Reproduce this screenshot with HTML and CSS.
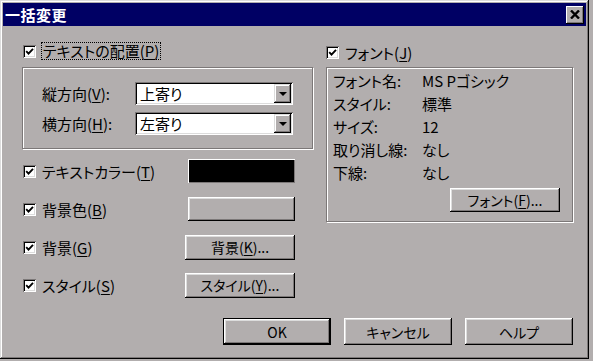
FILE: index.html
```html
<!DOCTYPE html>
<html lang="ja">
<head>
    <meta charset="UTF-8">
    <meta name="viewport" content="width=device-width, initial-scale=1.0">
    <title>一括変更</title>
    <link rel="stylesheet" href="styles.css">
</head>
<body>
    <div class="window">
        <div class="titlebar">
            <span class="title">一括変更</span>
            <div class="close">
                <svg width="10" height="9" viewBox="0 0 10 9">
                    <path d="M1 0.5 L9 8.5 M9 0.5 L1 8.5" stroke="#000" stroke-width="2.4"/>
                </svg>
            </div>
        </div>

        <div class="body">
            <div class="columns">
                <div class="left">
                    <div class="check">
                        <span class="box"><svg width="9" height="9" viewBox="0 0 9 9"><path d="M1.2 4.2 L3.5 6.6 L8 1.8" fill="none" stroke="#000" stroke-width="1.9"/></svg></span>
                        <span class="focus">テキストの配置(<u>P</u>)</span>
                    </div>

                    <div class="group align">
                        <div class="field">
                            <span class="field-label">縦方向(<u>V</u>):</span>
                            <div class="combo"><span class="combo-text">上寄り</span><span class="drop"><i class="arrow"></i></span></div>
                        </div>
                        <div class="field">
                            <span class="field-label">横方向(<u>H</u>):</span>
                            <div class="combo"><span class="combo-text">左寄り</span><span class="drop"><i class="arrow"></i></span></div>
                        </div>
                    </div>

                    <div class="options">
                        <div class="opt">
                            <div class="check">
                                <span class="box"><svg width="9" height="9" viewBox="0 0 9 9"><path d="M1.2 4.2 L3.5 6.6 L8 1.8" fill="none" stroke="#000" stroke-width="1.9"/></svg></span>
                                <span>テキストカラー(<u>T</u>)</span>
                            </div>
                            <div class="swatch black"></div>
                        </div>
                        <div class="opt">
                            <div class="check">
                                <span class="box"><svg width="9" height="9" viewBox="0 0 9 9"><path d="M1.2 4.2 L3.5 6.6 L8 1.8" fill="none" stroke="#000" stroke-width="1.9"/></svg></span>
                                <span>背景色(<u>B</u>)</span>
                            </div>
                            <div class="swatch"></div>
                        </div>
                        <div class="opt">
                            <div class="check">
                                <span class="box"><svg width="9" height="9" viewBox="0 0 9 9"><path d="M1.2 4.2 L3.5 6.6 L8 1.8" fill="none" stroke="#000" stroke-width="1.9"/></svg></span>
                                <span>背景(<u>G</u>)</span>
                            </div>
                            <div class="btn opt-btn">背景(<u>K</u>)...</div>
                        </div>
                        <div class="opt">
                            <div class="check">
                                <span class="box"><svg width="9" height="9" viewBox="0 0 9 9"><path d="M1.2 4.2 L3.5 6.6 L8 1.8" fill="none" stroke="#000" stroke-width="1.9"/></svg></span>
                                <span>スタイル(<u>S</u>)</span>
                            </div>
                            <div class="btn opt-btn">スタイル(<u>Y</u>)...</div>
                        </div>
                    </div>
                </div>

                <div class="right">
                    <div class="check">
                        <span class="box"><svg width="9" height="9" viewBox="0 0 9 9"><path d="M1.2 4.2 L3.5 6.6 L8 1.8" fill="none" stroke="#000" stroke-width="1.9"/></svg></span>
                        <span>フォント(<u>J</u>)</span>
                    </div>

                    <div class="group font-info">
                        <div class="info">
                            <span>フォント名:</span><span>MS Pゴシック</span>
                            <span>スタイル:</span><span>標準</span>
                            <span>サイズ:</span><span>12</span>
                            <span>取り消し線:</span><span>なし</span>
                            <span>下線:</span><span>なし</span>
                        </div>
                        <div class="font-btn-row">
                            <div class="btn font-btn">フォント(<u>F</u>)...</div>
                        </div>
                    </div>
                </div>
            </div>

            <div class="actions">
                <div class="btn default">OK</div>
                <div class="btn">キャンセル</div>
                <div class="btn">ヘルプ</div>
            </div>
        </div>
    </div>
</body>
</html>
```

FILE: styles.css
```css
body {
    margin: 0;
    background: #b2aeae;
    font-family: "Noto Sans CJK JP", "Noto Sans", sans-serif;
    font-size: 15px;
    font-feature-settings: "palt";
    color: #000;
}
u {
    text-decoration-thickness: 1px;
    text-underline-offset: 2px;
}
.window {
    width: 589px;
    height: 359px;
    box-sizing: border-box;
    padding: 3px;
    background: #b2aeae;
    box-shadow: inset -1px -1px #000, inset 1px 1px #dcdcdc, inset -2px -2px #7c7878, inset 2px 2px #fff;
    display: flex;
    flex-direction: column;
}
.titlebar {
    height: 23px;
    background: #000064;
    display: flex;
    align-items: center;
    justify-content: space-between;
    padding: 0 2px 0 2px;
}
.title {
    color: #fff;
    font-weight: bold;
    font-size: 15px;
    letter-spacing: 0.5px;
}
.close {
    width: 18px;
    height: 18px;
    box-sizing: border-box;
    background: #b2aeae;
    box-shadow: inset -1px -1px #000, inset 1px 1px #fff, inset -2px -2px #7c7878;
    display: flex;
    align-items: center;
    justify-content: center;
    padding-right: 1px;
}
.body {
    padding: 17px 13px 0 19px;
}
.columns {
    display: flex;
    gap: 13px;
}
.left {
    width: 291px;
}
.right {
    width: 247px;
}
.check {
    display: flex;
    align-items: center;
    height: 16px;
    gap: 6px;
}
.left > .check {
    padding-left: 1px;
}
.right > .check {
    margin-top: 1px;
}
.box {
    width: 13px;
    height: 13px;
    box-sizing: border-box;
    background: #fff;
    box-shadow: inset 1px 1px #7c7878, inset -1px -1px #fff, inset 2px 2px #000, inset -2px -2px #dcdcdc;
    display: flex;
    align-items: center;
    justify-content: center;
    flex-shrink: 0;
}
.focus {
    outline: 1px dotted #000;
    outline-offset: 0;
    padding: 0 1px;
    line-height: 16px;
}
.group {
    border: 1px solid #7c7878;
    box-shadow: inset 1px 1px #fff, 1px 1px #fff;
}
.align {
    margin-top: 8px;
    height: 82px;
    box-sizing: border-box;
    padding: 14px 19px 0 19px;
    display: flex;
    flex-direction: column;
    gap: 7px;
}
.field {
    display: flex;
    align-items: center;
    justify-content: space-between;
}
.combo {
    width: 158px;
    height: 23px;
    box-sizing: border-box;
    background: #fff;
    box-shadow: inset 1px 1px #7c7878, inset -1px -1px #fff, inset 2px 2px #000, inset -2px -2px #dcdcdc;
    display: flex;
    align-items: center;
    padding: 2px;
}
.combo-text {
    flex: 1;
    padding-left: 3px;
}
.drop {
    width: 17px;
    height: 19px;
    box-sizing: border-box;
    background: #b2aeae;
    box-shadow: inset -1px -1px #000, inset 1px 1px #dcdcdc, inset -2px -2px #7c7878, inset 2px 2px #fff;
    display: flex;
    align-items: center;
    justify-content: center;
}
.arrow {
    width: 0;
    height: 0;
    border-left: 4px solid transparent;
    border-right: 4px solid transparent;
    border-top: 4px solid #000;
}
.options {
    margin-top: 10px;
    display: flex;
    flex-direction: column;
    gap: 14px;
    padding-right: 18px;
}
.opt {
    height: 24px;
    display: flex;
    align-items: center;
    justify-content: space-between;
    padding-left: 1px;
}
.btn {
    height: 24px;
    box-sizing: border-box;
    background: #b2aeae;
    box-shadow: inset -1px -1px #000, inset 1px 1px #fff, inset -2px -2px #7c7878, inset 2px 2px #dcdcdc;
    display: flex;
    align-items: center;
    justify-content: center;
    font-size: 14px;
}
.swatch {
    width: 107px;
    height: 24px;
    box-sizing: border-box;
    background: #b2aeae;
    box-shadow: inset -1px -1px #000, inset 1px 1px #fff, inset -2px -2px #7c7878, inset 2px 2px #dcdcdc;
}
.swatch.black {
    background: #000;
    box-shadow: inset 1px 1px #fff, inset -1px -1px #7c7878;
}
.opt-btn {
    width: 110px;
    height: 25px;
}
.font-info {
    margin-top: 7px;
    height: 155px;
    box-sizing: border-box;
    padding: 1px 12px 0 6px;
}
.info {
    display: grid;
    grid-template-columns: 89px 1fr;
    grid-auto-rows: 23px;
    align-items: center;
}
.font-btn-row {
    display: flex;
    justify-content: flex-end;
    margin-top: 4px;
}
.font-btn {
    width: 110px;
    height: 24px;
}
.actions {
    display: flex;
    justify-content: flex-end;
    gap: 13px;
    margin-top: 21px;
}
.actions .btn {
    width: 108px;
    height: 27px;
}
.actions .default {
    box-shadow: inset 0 0 0 1px #000, inset -2px -2px #000, inset 2px 2px #fff, inset -3px -3px #7c7878, inset 3px 3px #dcdcdc;
}
```
